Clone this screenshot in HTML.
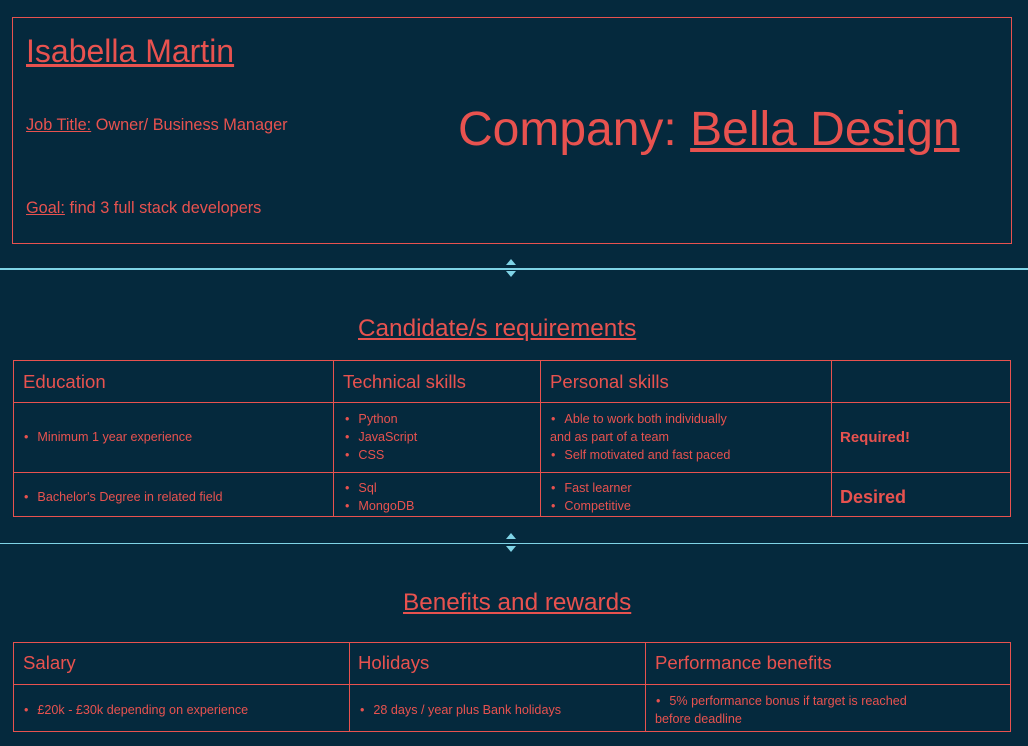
<!DOCTYPE html>
<html><head><meta charset="utf-8"><style>
*{margin:0;padding:0;box-sizing:border-box}
body{width:1028px;height:746px;background:#05293d;color:#e8524f;font-family:"Liberation Sans",sans-serif;position:relative;overflow:hidden}
.a{position:absolute;white-space:nowrap}
.u{text-decoration:underline}
.box{position:absolute;border:1px solid #e8524f}
.hl{position:absolute;left:0;width:1028px;height:2px;background:#7fd3e6}
.vl{position:absolute;width:1px;background:#e8524f}
.hr{position:absolute;height:1px;background:#e8524f}
.s{font-size:12.6px}
.h{font-size:18.6px}
.b:before{content:"•";margin-right:9px;margin-left:4px}
.tri{position:absolute;width:0;height:0;border-left:5px solid transparent;border-right:5px solid transparent}
</style></head><body>
<div class="box" style="left:12px;top:17px;width:1000px;height:227px"></div>
<div class="a u" style="left:26px;top:33px;font-size:32px">Isabella Martin</div>
<div class="a" style="left:26px;top:116px;font-size:16.3px"><span class="u">Job Title:</span> Owner/ Business Manager</div>
<div class="a" style="left:26px;top:199px;font-size:16.3px"><span class="u">Goal:</span> find 3 full stack developers</div>
<div class="a" style="left:458px;top:102px;font-size:48px">Company: <span class="u">Bella Design</span></div>

<div class="hl" style="top:268px"></div>
<div class="tri" style="left:506px;top:259px;border-bottom:6px solid #7fd3e6"></div>
<div class="tri" style="left:506px;top:271px;border-top:6px solid #7fd3e6"></div>

<div class="a u" style="left:358px;top:315px;font-size:24.3px">Candidate/s requirements</div>
<div class="box" style="left:13px;top:360px;width:998px;height:157px"></div>
<div class="hr" style="left:13px;top:402px;width:998px"></div>
<div class="hr" style="left:13px;top:472px;width:998px"></div>
<div class="vl" style="left:333px;top:360px;height:157px"></div>
<div class="vl" style="left:540px;top:360px;height:157px"></div>
<div class="vl" style="left:831px;top:360px;height:157px"></div>
<div class="a h" style="left:23px;top:371px">Education</div>
<div class="a h" style="left:343px;top:371px">Technical skills</div>
<div class="a h" style="left:550px;top:371px">Personal skills</div>
<div class="a s b" style="left:20px;top:430px">Minimum 1 year experience</div>
<div class="a s b" style="left:20px;top:490px">Bachelor's Degree in related field</div>
<div class="a s b" style="left:341px;top:412px">Python</div>
<div class="a s b" style="left:341px;top:430px">JavaScript</div>
<div class="a s b" style="left:341px;top:448px">CSS</div>
<div class="a s b" style="left:341px;top:481px">Sql</div>
<div class="a s b" style="left:341px;top:499px">MongoDB</div>
<div class="a s b" style="left:547px;top:412px">Able to work both individually</div>
<div class="a s" style="left:550px;top:430px">and as part of a team</div>
<div class="a s b" style="left:547px;top:448px">Self motivated and fast paced</div>
<div class="a s b" style="left:547px;top:481px">Fast learner</div>
<div class="a s b" style="left:547px;top:499px">Competitive</div>
<div class="a" style="left:840px;top:429px;font-size:15px;font-weight:bold">Required!</div>
<div class="a" style="left:840px;top:487px;font-size:18px;font-weight:bold">Desired</div>

<div class="hl" style="top:543px;height:1px"></div>
<div class="tri" style="left:506px;top:533px;border-bottom:6px solid #7fd3e6"></div>
<div class="tri" style="left:506px;top:546px;border-top:6px solid #7fd3e6"></div>

<div class="a u" style="left:403px;top:589px;font-size:24.3px">Benefits and rewards</div>
<div class="box" style="left:13px;top:642px;width:998px;height:90px"></div>
<div class="hr" style="left:13px;top:684px;width:998px"></div>
<div class="vl" style="left:349px;top:642px;height:90px"></div>
<div class="vl" style="left:645px;top:642px;height:90px"></div>
<div class="a h" style="left:23px;top:652px">Salary</div>
<div class="a h" style="left:358px;top:652px">Holidays</div>
<div class="a h" style="left:655px;top:652px">Performance benefits</div>
<div class="a s b" style="left:20px;top:703px">£20k - £30k depending on experience</div>
<div class="a s b" style="left:356px;top:703px">28 days / year plus Bank holidays</div>
<div class="a s b" style="left:652px;top:694px">5% performance bonus if target is reached</div>
<div class="a s" style="left:655px;top:712px">before deadline</div>
</body></html>
